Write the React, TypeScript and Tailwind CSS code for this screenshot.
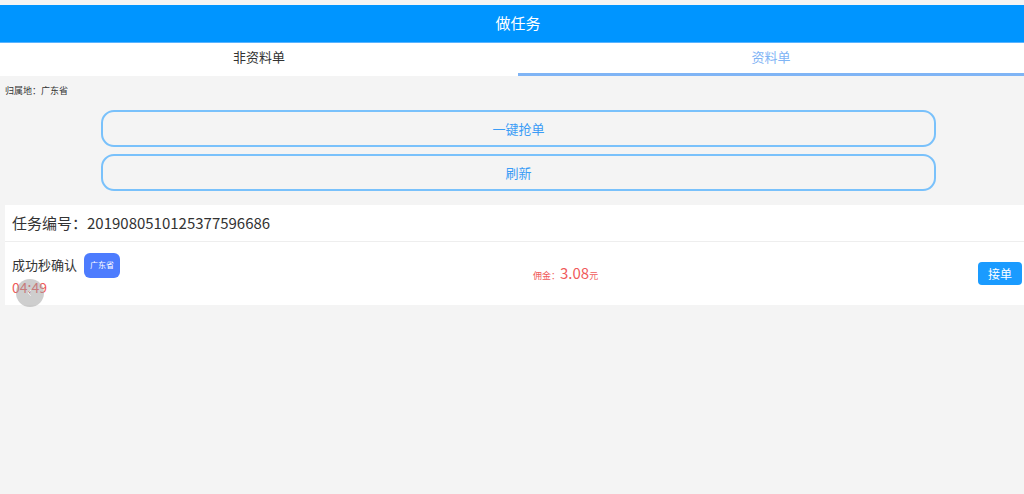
export default function App() {
  return (
    <main className="relative h-[494px] w-[1024px] overflow-hidden bg-[#f4f4f4] font-['Noto_Sans_CJK_SC','Noto_Sans',sans-serif]">
      {/* Header */}
      <div className="mt-[5px] flex h-[38px] items-center justify-center border-b border-[#5ab4ff] bg-[#0095ff] pl-[12px] text-[15px] text-white">
        做任务
      </div>

      {/* Tabs */}
      <div className="flex h-[33px] bg-white text-[13px]">
        <div className="flex w-[518px] items-center justify-center pb-[6px] text-[#333]">非资料单</div>
        <div className="flex flex-1 items-center justify-center border-b-[3px] border-[#7fb4f5] pb-[3px] text-[#7fb4f5]">
          资料单
        </div>
      </div>

      <div className="px-[5px] pt-[8px] text-[9px] leading-[14px] text-[#333]">归属地：广东省</div>

      {/* Actions */}
      <div className="flex flex-col gap-[7px] pl-[101px] pr-[88px] pt-[12px]">
        <button className="h-[37px] rounded-[13px] border-2 border-[#79c1fb] text-[13px] text-[#3a9cf6]">一键抢单</button>
        <button className="h-[37px] rounded-[13px] border-2 border-[#79c1fb] text-[13px] text-[#3a9cf6]">刷新</button>
      </div>

      {/* Task card */}
      <div className="ml-[5px] mt-[14px] bg-white">
        <div className="flex h-[37px] items-center border-b border-[#eeeeee] px-[7px] text-[15px] text-[#333]">
          任务编号：2019080510125377596686
        </div>
        <div className="flex h-[63px] items-center pl-[7px] pr-[2px]">
          <div className="flex w-[300px] flex-col">
            <div className="flex items-center gap-[7px]">
              <span className="text-[13px] text-[#333]">成功秒确认</span>
              <span className="flex h-[25px] w-[36px] items-center justify-center rounded-[6px] bg-[#4d7cfe] text-[8px] text-white">
                广东省
              </span>
            </div>
            <span className="mt-[1px] text-[14px] leading-[16px] text-[#f05a5a]">04:49</span>
          </div>
          <div className="ml-[221px] flex items-baseline text-[#f05a5a]">
            <span className="text-[9px]">佣金：</span>
            <span className="text-[15px]">3.08</span>
            <span className="text-[9px]">元</span>
          </div>
          <button className="ml-auto flex h-[23px] w-[44px] items-center justify-center rounded-[4px] bg-[#1a9bff] text-[12px] text-white">
            接单
          </button>
        </div>
      </div>

      {/* Floating back button */}
      <div className="absolute left-[16px] top-[279px] flex h-[28px] w-[28px] items-center justify-center rounded-full bg-[#9e9e9e]/50">
        <svg width="12" height="12" viewBox="0 0 12 12" fill="none" stroke="#ffffff" strokeOpacity="0.6" strokeWidth="1">
          <path d="M7 3 L4 6 L7 9" />
        </svg>
      </div>
    </main>
  )
}
